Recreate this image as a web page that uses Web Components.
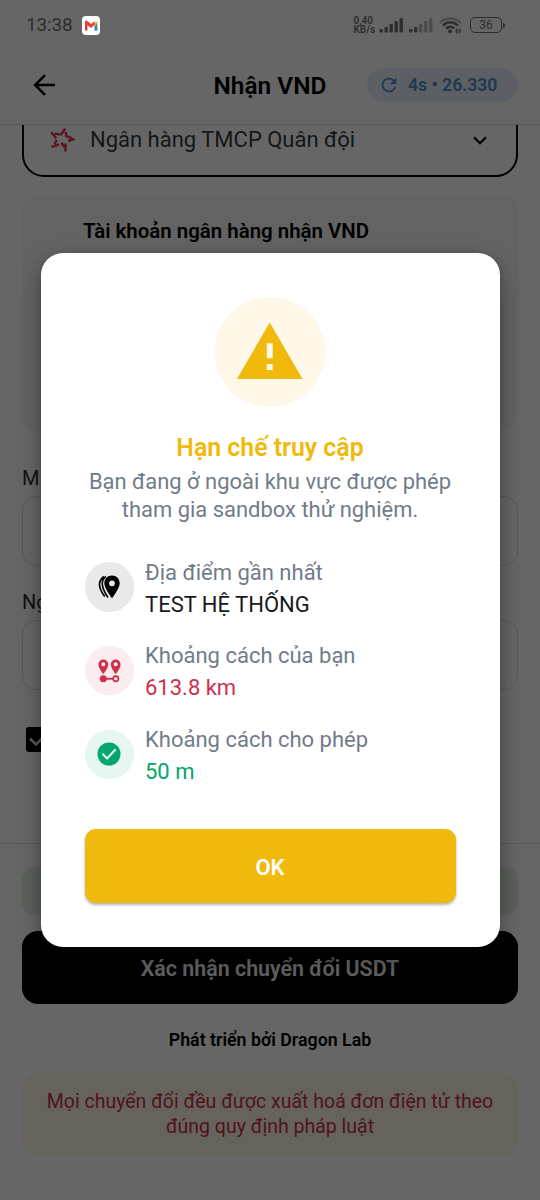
<!DOCTYPE html>
<html lang="vi">
<head>
<meta charset="utf-8">
<title>Nhận VND</title>
<style>
html,body{margin:0;height:100%;overflow:hidden;background:#fff}
body{font-family:Roboto,"Noto Sans",sans-serif}
</style>
</head>
<body>
<receive-screen></receive-screen>
<script>
const define=(name,html)=>customElements.define(name,class extends HTMLElement{
  constructor(){super();const t=document.createElement('template');t.innerHTML=html;
    this.attachShadow({mode:'open'}).append(t.content.cloneNode(true));}
});

define('status-bar',`<style>
:host{display:flex;align-items:center;box-sizing:border-box;height:48px;padding:2px 35px 0 26px;color:#2e2e2e}
.time{font-size:19px;line-height:24px;letter-spacing:-.15px;font-weight:400}
.mail{width:18px;height:19px;margin-left:9px}
.net{margin-left:auto;font-size:10px;line-height:9.5px;font-weight:600;width:21px;white-space:nowrap}
svg{display:block}
.s1{margin-left:4px}.s2{margin-left:5.5px}.wifi{margin-left:5px}
.bat{margin-left:8px;display:flex;align-items:center}
.bat b{box-sizing:border-box;width:32px;height:16px;border:1.5px solid #2e2e2e;border-radius:5px;font-size:12px;font-weight:400;line-height:14px;text-align:center}
.bat i{width:2px;height:5px;background:#2e2e2e;border-radius:0 2px 2px 0;margin-left:1px}
</style>
<span class="time">13:38</span>
<svg class="mail" viewBox="0 0 18 19"><rect width="18" height="19" rx="4" fill="#fff"/><path d="M3 6v8.5h2.4V8.6z" fill="#d93c3c"/><path d="M15.3 6v8.5h-2.6V8.6z" fill="#3aa856"/><path d="M12.7 9.8h2.6v4.7h-2.6z" fill="#3b86e8"/><path d="M12.6 7.4 15.3 5v2.6l-2.7 2.2z" fill="#f4b90a"/><path d="M3 5.2c.7-1 1.8-.7 2.4-.2L9.1 8 12.8 5v3.8L9.1 12 3 7.5z" fill="#ea4335"/></svg>
<span class="net">0,40<br>KB/s</span>
<svg class="s1" width="25" height="16" fill="#2e2e2e"><rect x="0.5" y="12" width="3.4" height="3.5" rx="1"/><rect x="5.500" y="10" width="3.4" height="5.5" rx="1"/><rect x="10.500" y="7" width="3.4" height="8.5" rx="1"/><rect x="15.500" y="4" width="3.4" height="11.5" rx="1"/><rect x="20.500" y="1" width="3.4" height="14.5" rx="1"/></svg>
<svg class="s2" width="25" height="16" fill="#4c4c4c"><rect x="0" y="12" width="3.4" height="3.5" rx="1" fill="#2e2e2e"/><rect x="5" y="10" width="3.4" height="5.5" rx="1" fill="#2e2e2e"/><rect x="10" y="7" width="3.4" height="8.5" rx="1"/><rect x="15" y="4" width="3.4" height="11.5" rx="1"/><rect x="20" y="1" width="3.4" height="14.5" rx="1"/></svg>
<svg class="wifi" width="23" height="17" fill="none" stroke="#2e2e2e" stroke-width="2.4"><path d="M1 5.5Q11 -2.5 22 5.5" stroke="#4c4c4c"/><path d="M3.8 8.5Q11.2 2.2 19 8.5M7 11.5Q11.2 7.8 15.4 11.5"/><circle cx="11" cy="14.3" r="1.9" fill="#2e2e2e" stroke="none"/><path d="M17.8 11.5v5M20.5 11.5v5" stroke-width="1.3"/><path d="m16 14.5 2-2M22 13.5l-1.7 2" stroke-width="1"/></svg>
<span class="bat"><b>36</b><i></i></span>`);

define('rate-pill',`<style>
:host{display:flex;align-items:center;box-sizing:border-box;width:151px;height:34px;border-radius:17px;background:#e5effc;color:#508cc8;padding-left:11px;font-size:17.6px;font-weight:600;line-height:22px;white-space:nowrap}
svg{width:22px;height:22px;margin-right:8px;display:block}
</style><svg viewBox="0 0 24 24" fill="currentColor"><path d="M17.65 6.35A7.96 7.96 0 0 0 12 4a8 8 0 1 0 7.73 10h-2.08A6 6 0 1 1 12 6c1.66 0 3.14.69 4.22 1.78L13 11h7V4z"/></svg><slot></slot>`);

define('app-header',`<style>
:host{display:grid;grid-template-columns:1fr auto 1fr;align-items:center;box-sizing:border-box;height:77px;padding:0 22px 2px;border-bottom:1.5px solid #e0e0e0}
.back{width:22px;height:22px;margin-left:11px;display:block}
h1{margin:0;padding-top:2px;font-size:24.45px;line-height:30px;font-weight:600;color:#000;white-space:nowrap}
rate-pill{justify-self:end}
</style>
<svg class="back" viewBox="0 0 22 22" fill="none" stroke="#000" stroke-width="2.5"><path d="M22 11H2.5M12 1.2 2.2 11l9.8 9.8"/></svg>
<h1><slot></slot></h1><rate-pill>4s • 26.330</rate-pill>`);

define('bank-select',`<style>
:host{display:flex;align-items:center;box-sizing:border-box;height:74px;margin-top:-22px;padding:0 27px 0 26px;border:2px solid #000;border-radius:22px;font-size:22px;line-height:28px;color:#353b40;flex:none}
.logo{width:26px;height:26px;margin-right:14px}.chev{width:14px;height:9px;margin-left:auto;margin-right:2px}
svg{display:block}
</style>
<svg class="logo" viewBox="0 0 26 26" fill="none" stroke="#e6304f" stroke-width="2.4"><path d="M15.2 1.5 10.8 8.2M15.8 5l.4 5M24.5 11.8l-6.5 2.2M16.8 9.3l5 1.9M15.5 24.5v-8M11.5 15.8l3 4.3M1.5 20l7.500-2.6M6.8 12.8 4.5 17M1.3 5.2l5 6M4.8 6.300l5.2 1.4"/></svg>
<slot></slot>
<svg class="chev" viewBox="0 0 14 9" fill="none" stroke="#000" stroke-width="2.3"><path d="m1 1.2 6 6 6-6"/></svg>`);

define('account-card',`<style>
:host{display:block;box-sizing:border-box;height:237px;margin-top:17px;border-radius:18px;background:#f7f7f7;padding:22.5px 61px;font-size:20.45px;line-height:28px;font-weight:600;color:#000;flex:none;white-space:nowrap}
</style><slot></slot>`);

define('form-field',`<style>
:host{display:block;flex:none}
label{display:block;font-size:20px;line-height:25px;color:#2b2f33}
.box{box-sizing:border-box;height:70px;margin-top:5px;border:1.5px solid #dcdcdc;border-radius:14px}
</style><label><slot></slot></label><div class="box"></div>`);

define('check-mark',`<style>
:host{display:block;width:25px;height:25px;margin:37px 0 0 4px;border-radius:3px;background:#000;flex:none}svg{display:block}
</style><svg width="25" height="25" fill="none" stroke="#d8d8d8" stroke-width="2.6"><path d="m4 11.5 6 6 11-11"/></svg>`);

define('app-footer',`<style>
:host{display:flex;flex-direction:column;box-sizing:border-box;height:357px;border-top:1.5px solid #dcdcdc;padding:22.5px 22px 0}
.ok{height:48px;border-radius:12px;background:#e3f1e4;flex:none}
.go{height:72.5px;margin-top:16.5px;border-radius:16px;background:#000;color:#f4f4f4;font-size:21.4px;font-weight:600;line-height:76px;text-align:center;flex:none}
.dev{margin-top:24px;font-size:17.8px;line-height:24px;font-weight:600;text-align:center;color:#000}
.note{box-sizing:border-box;height:82px;margin-top:21.5px;border-radius:16px;background:#fff8e5;color:#c9304f;font-size:19.5px;line-height:25px;padding:16px 20px;text-align:center}
.note span{display:block;white-space:nowrap}
</style>
<div class="ok"></div><div class="go">Xác nhận chuyển đổi USDT</div><div class="dev">Phát triển bởi Dragon Lab</div>
<div class="note"><span>Mọi chuyển đổi đều được xuất hoá đơn điện tử theo</span><span>đúng quy định pháp luật</span></div>`);

define('detail-row',`<style>
:host{display:flex;align-items:center;height:64px;gap:11px;font-size:22px;line-height:32px;color:#717b89;white-space:nowrap}
.disc{display:grid;place-items:center;width:49.5px;height:49.5px;margin-bottom:2px;border-radius:50%;background:var(--disc);color:var(--tone);flex:none}
.text{padding-top:1.5px}
.value{color:var(--tone)}
</style>
<div class="disc"><slot name="icon"></slot></div>
<div class="text"><div><slot name="label"></slot></div><div class="value"><slot></slot></div></div>`);

define('alert-dialog',`<style>
:host{display:flex;flex-direction:column;align-items:center;box-sizing:border-box;width:459px;height:694px;padding:44px;border-radius:22px;background:#fff;box-shadow:0 12px 26px rgba(0,0,0,.28),0 2px 10px rgba(0,0,0,.15)}
.badge{display:grid;place-items:center;width:110px;height:110px;border-radius:50%;background:#fff8e9;flex:none}
.badge svg,detail-row svg{display:block}
h2{margin:26px 0 0;font-size:24.85px;line-height:30px;font-weight:600;color:#f0b90b;white-space:nowrap}
p{margin:5px 0 0;font-size:21.95px;line-height:27.5px;color:#717b89;text-align:center;white-space:nowrap}
.rows{display:flex;flex-direction:column;gap:19.7px;align-self:stretch;margin-top:33px}
button{font:600 22px/28px Roboto,sans-serif;box-sizing:border-box;width:371px;height:73.5px;margin-top:42px;padding:3px 0 0;border:0;border-radius:11px;background:#f0b90b;color:#fff;box-shadow:0 2px 3px rgba(0,0,0,.3);flex:none}
</style>
<div class="badge"><svg width="71.5" height="71.5" viewBox="0 -.15 24 24" fill="#f0b90b"><path d="M1 21h22L12 2zm12-3h-2v-2h2zm0-4h-2V9h2z"/></svg></div>
<h2>Hạn chế truy cập</h2>
<p>Bạn đang ở ngoài khu vực được phép<br>tham gia sandbox thử nghiệm.</p>
<div class="rows">
<detail-row style="--disc:#e9e9e9;--tone:#17191c"><svg slot="icon" width="24" height="26" viewBox="0 0 24 26" fill="#000"><path fill-rule="evenodd" d="M15 1.5C10.500 1.500 7.300 4.900 7.300 9.200c0 5.200 7.700 15 7.700 15s7.700-9.800 7.700-15c0-4.300-3.200-7.700-7.700-7.700zm0 10.700a2.900 2.900 0 1 1 0-5.800 2.900 2.900 0 0 1 0 5.800z"/><path d="M8.800 2.300C3.200 6.800 4.400 14 11 23.500M6.800 2.500C.5 7.500 1.500 14.500 7.800 22.500" fill="none" stroke="#000" stroke-width="1.600"/></svg><span slot="label">Địa điểm gần nhất</span>TEST HỆ THỐNG</detail-row>
<detail-row style="--disc:#faecef;--tone:#cc304b"><svg slot="icon" width="25" height="26" viewBox="0 0 25 26" fill="#cc304b"><path fill-rule="evenodd" d="M6.3 1.5A4.9 4.9 0 0 0 1.4 6.400C1.400 10.200 6.300 16 6.300 16s4.900-5.800 4.900-9.600A4.900 4.900 0 0 0 6.300 1.500zm0 6.700a2 2 0 1 1 0-4 2 2 0 0 1 0 4zM18.700 1.500a4.900 4.900 0 0 0-4.900 4.900c0 3.800 4.900 9.600 4.900 9.600s4.900-5.800 4.900-9.600a4.900 4.900 0 0 0-4.900-4.900zm0 6.700a2 2 0 1 1 0-4 2 2 0 0 1 0 4z"/><circle cx="6.3" cy="20.8" r="3.5"/><path d="M6 19.900h10.500v1.800H6z"/><circle cx="18.8" cy="20.8" r="2.6" fill="none" stroke="#cc304b" stroke-width="1.7"/></svg><span slot="label">Khoảng cách của bạn</span>613.8 km</detail-row>
<detail-row style="--disc:#e6f6f0;--tone:#03a66d"><svg slot="icon" width="24" height="24" viewBox="0 0 24 24"><circle cx="12" cy="12" r="11.5" fill="#03a66d"/><path d="m5.500 11.800 4.600 4.700 8.600-9.300" fill="none" stroke="#e6f6f0" stroke-width="2"/></svg><span slot="label">Khoảng cách cho phép</span>50 m</detail-row>
</div>
<button>OK</button>`);

define('receive-screen',`<style>
:host{display:block;position:relative;width:540px;height:1200px;overflow:hidden;background:#fff}
.page{display:flex;flex-direction:column;height:1200px;padding-top:48px;box-sizing:border-box}
main{display:flex;flex-direction:column;height:718px;overflow:hidden;padding:0 22px;box-sizing:border-box;flex:none}
.f1{margin-top:35px}.f2{margin-top:24px}
.scrim{position:absolute;inset:0;background:rgba(0,0,0,.6);display:flex;flex-direction:column;align-items:center}
status-bar{align-self:stretch}alert-dialog{margin-top:205px}
</style>
<div class="page"><app-header>Nhận VND</app-header>
<main><bank-select>Ngân hàng TMCP Quân đội</bank-select><account-card>Tài khoản ngân hàng nhận VND</account-card><form-field class="f1">M</form-field><form-field class="f2">Ng</form-field><check-mark></check-mark></main>
<app-footer></app-footer></div>
<div class="scrim"><status-bar></status-bar><alert-dialog></alert-dialog></div>`);
</script>
</body>
</html>
